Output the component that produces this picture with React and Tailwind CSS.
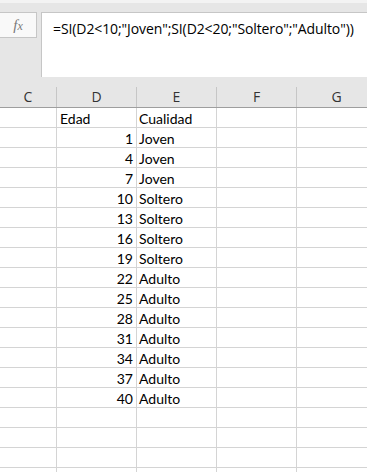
import React from 'react';

const rows = [
  ['Edad', 'Cualidad'],
  [1, 'Joven'],
  [4, 'Joven'],
  [7, 'Joven'],
  [10, 'Soltero'],
  [13, 'Soltero'],
  [16, 'Soltero'],
  [19, 'Soltero'],
  [22, 'Adulto'],
  [25, 'Adulto'],
  [28, 'Adulto'],
  [31, 'Adulto'],
  [34, 'Adulto'],
  [37, 'Adulto'],
  [40, 'Adulto'],
  ['', ''],
  ['', ''],
  ['', ''],
  ['', ''],
];

const cols = ['C', 'D', 'E', 'F', 'G'];

export default function App() {
  return (
    <div className="w-[367px] h-[472px] overflow-hidden bg-white" style={{ fontFamily: '"Open Sans", "Noto Sans", sans-serif' }}>
      {/* formula bar */}
      <div className="h-[77px] bg-[#e6e6e6] border-t-[3px] border-[#f3f3f3] flex items-start pt-[9px]">
        <div className="ml-[-1px] w-[38px] h-[26px] bg-[#f9f9f9] border border-[#c6c6c6] flex items-center justify-center">
          <span className="text-[#7a7a7a] italic text-[15px] leading-none" style={{ fontFamily: '"Liberation Serif", serif' }}>
            f<span className="text-[12px]">x</span>
          </span>
        </div>
        <div className="ml-[4px] flex-1 h-[65px] bg-white border-l border-t border-[#c6c6c6] mr-[-4px] pl-[11px] pt-[3px]">
          <span className="text-[14px] text-black tracking-[-0.1px]">=SI(D2&lt;10;"Joven";SI(D2&lt;20;"Soltero";"Adulto"))</span>
        </div>
      </div>
      {/* column headers */}
      <div className="bg-[#e6e6e6] pt-[10px]">
        <div className="grid grid-cols-[57px_80px_80px_80px_80px] h-[21px] border-b border-[#9e9e9e]">
          {cols.map((c) => (
            <div key={c} className="border-r border-[#c6c6c6] flex items-center justify-center text-[14px] text-[#333] leading-none">
              {c}
            </div>
          ))}
        </div>
      </div>
      {/* cells */}
      <div style={{ fontFamily: '"Lato", "Liberation Sans", sans-serif' }}>
        {rows.map(([d, e], i) => (
          <div key={i} className="grid grid-cols-[57px_80px_80px_80px_80px] h-5">
            <div className="border-r border-b border-[#d4d4d4]" />
            <div className={`border-r border-b border-[#d4d4d4] flex items-end pb-[1px] text-[14px] leading-none text-black ${typeof d === 'number' ? 'justify-end pr-[3px]' : 'pl-[3px]'}`}>
              {d}
            </div>
            <div className="border-r border-b border-[#d4d4d4] flex items-end pb-[1px] pl-[2px] text-[14px] leading-none text-black">
              {e}
            </div>
            <div className="border-r border-b border-[#d4d4d4]" />
            <div className="border-r border-b border-[#d4d4d4]" />
          </div>
        ))}
      </div>
    </div>
  );
}
